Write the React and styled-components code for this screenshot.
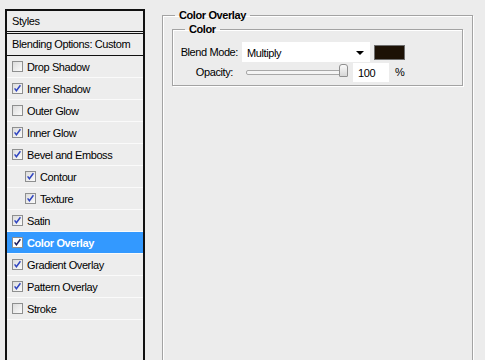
import React from "react";
import styled, { createGlobalStyle } from "styled-components";

const GlobalStyle = createGlobalStyle`
  html, body {
    margin: 0;
    padding: 0;
    background: #ececec;
    overflow: hidden;
  }
  body {
    font-family: "Liberation Sans", Arial, sans-serif;
    font-size: 11px;
    letter-spacing: -0.4px;
    color: #000;
  }
`;

const Page = styled.div`
  display: flex;
  align-items: flex-start;
  width: 485px;
  height: 360px;
  padding: 9px 0 0 5px;
  box-sizing: border-box;
  overflow: hidden;
`;

const StylesPanel = styled.div`
  width: 140px;
  height: 360px;
  flex: none;
  box-sizing: border-box;
  border: 2px solid #111;
  border-bottom: none;
  background: #ededed;
`;

const PanelHead = styled.div`
  height: 20px;
  line-height: 20px;
  padding-left: 5px;
  border-bottom: 3px double #111;
`;

const BlendRow = styled.div`
  height: 21px;
  line-height: 21px;
  padding-left: 5px;
  border-bottom: 1px solid #111;
`;

const Row = styled.div`
  display: flex;
  align-items: center;
  height: 21px;
  padding-left: ${(p) => (p.$indent ? 18 : 5)}px;
  gap: 4px;
  border-bottom: 1px solid #fafafa;
  background: ${(p) => (p.$active ? "#3399ff" : "transparent")};
  color: ${(p) => (p.$active ? "#fff" : "#000")};
  font-weight: ${(p) => (p.$active ? "bold" : "normal")};
`;

const Box = styled.span`
  width: 11px;
  height: 11px;
  box-sizing: border-box;
  border: 1px solid #8e8f8f;
  background: ${(p) =>
    p.$active ? "#fff" : "linear-gradient(135deg, #dcdcdc, #fbfbfb)"};
  display: flex;
  align-items: center;
  justify-content: center;
  flex: none;
`;

const Check = ({ active }) => (
  <svg width="9" height="9" viewBox="0 0 9 9">
    <path
      d="M1.6 4.4 L3.4 6.8 L7.4 1.2"
      fill="none"
      stroke={active ? "#1d1d60" : "#3045c0"}
      strokeWidth="1.5"
    />
  </svg>
);

const Right = styled.div`
  margin-left: 17px;
`;

const Group = styled.fieldset`
  margin: ${(p) => p.$top || 0}px 0 0 0;
  padding: 0 0 0 ${(p) => p.$inset}px;
  width: ${(p) => p.$w}px;
  height: ${(p) => p.$h}px;
  box-sizing: border-box;
  border: 1px solid #a3a3a3;
  box-shadow: inset 1px 1px 0 #fff, 1px 1px 0 #fff;
  min-inline-size: 0;
`;

const Legend = styled.legend`
  margin-left: ${(p) => p.$offset}px;
  padding: 0 4px;
  font-weight: bold;
  font-size: 11px;
  line-height: 13px;
`;

const FieldRow = styled.div`
  display: flex;
  align-items: center;
  height: 20px;
  margin-top: ${(p) => p.$top}px;
`;

const Label = styled.span`
  width: ${(p) => p.$w}px;
  text-align: right;
  flex: none;
`;

const Select = styled.div`
  width: 128px;
  height: 20px;
  box-sizing: border-box;
  background: #fff;
  display: flex;
  align-items: center;
  justify-content: space-between;
  padding: 2px 6px 0 5px;
  margin-left: 4px;
`;

const Arrow = styled.span`
  width: 0;
  height: 0;
  border-left: 4px solid transparent;
  border-right: 4px solid transparent;
  border-top: 4px solid #000;
`;

const Swatch = styled.span`
  width: 31px;
  height: 15px;
  margin-left: 4px;
  background: #1c1105;
  border: 1px solid #6d6d6d;
  box-sizing: border-box;
`;

const Slider = styled.div`
  position: relative;
  width: 98px;
  height: 3px;
  margin-left: 13px;
  border: 1px solid #a8a8a8;
  border-radius: 2px;
  background: #f4f4f4;
`;

const Thumb = styled.span`
  position: absolute;
  left: 92px;
  top: -7px;
  width: 7px;
  height: 11px;
  border: 1px solid #8f8f8f;
  border-radius: 3px 3px 1px 1px;
  background: linear-gradient(#fafafa, #d6d6d6);
`;

const NumInput = styled.span`
  width: 36px;
  height: 19px;
  line-height: 21px;
  margin-left: 7px;
  padding-left: 5px;
  box-sizing: border-box;
  background: #fff;
`;

const Unit = styled.span`
  margin-left: 6px;
`;

const effects = [
  { name: "Drop Shadow", on: false },
  { name: "Inner Shadow", on: true },
  { name: "Outer Glow", on: false },
  { name: "Inner Glow", on: true },
  { name: "Bevel and Emboss", on: true },
  { name: "Contour", on: true, indent: true },
  { name: "Texture", on: true, indent: true },
  { name: "Satin", on: true },
  { name: "Color Overlay", on: true, active: true },
  { name: "Gradient Overlay", on: true },
  { name: "Pattern Overlay", on: true },
  { name: "Stroke", on: false },
];

const App = () => {
  return (
    <>
      <GlobalStyle />
      <Page>
        <StylesPanel>
          <PanelHead>Styles</PanelHead>
          <BlendRow>Blending Options: Custom</BlendRow>
          {effects.map((v, i) => (
            <Row key={i} $indent={v.indent} $active={v.active}>
              <Box $active={v.active}>{v.on && <Check active={v.active} />}</Box>
              {v.name}
            </Row>
          ))}
        </StylesPanel>
        <Right>
          <Group $inset={9} $w={311} $h={360}>
            <Legend $offset={3}>Color Overlay</Legend>
            <Group $inset={0} $w={291} $h={63} $top={1}>
              <Legend $offset={12}>Color</Legend>
              <FieldRow $top={6}>
                <Label $w={65}>Blend Mode:</Label>
                <Select>
                  Multiply
                  <Arrow />
                </Select>
                <Swatch />
              </FieldRow>
              <FieldRow $top={0}>
                <Label $w={60}>Opacity:</Label>
                <Slider>
                  <Thumb />
                </Slider>
                <NumInput>100</NumInput>
                <Unit>%</Unit>
              </FieldRow>
            </Group>
          </Group>
        </Right>
      </Page>
    </>
  );
};

export default App;
